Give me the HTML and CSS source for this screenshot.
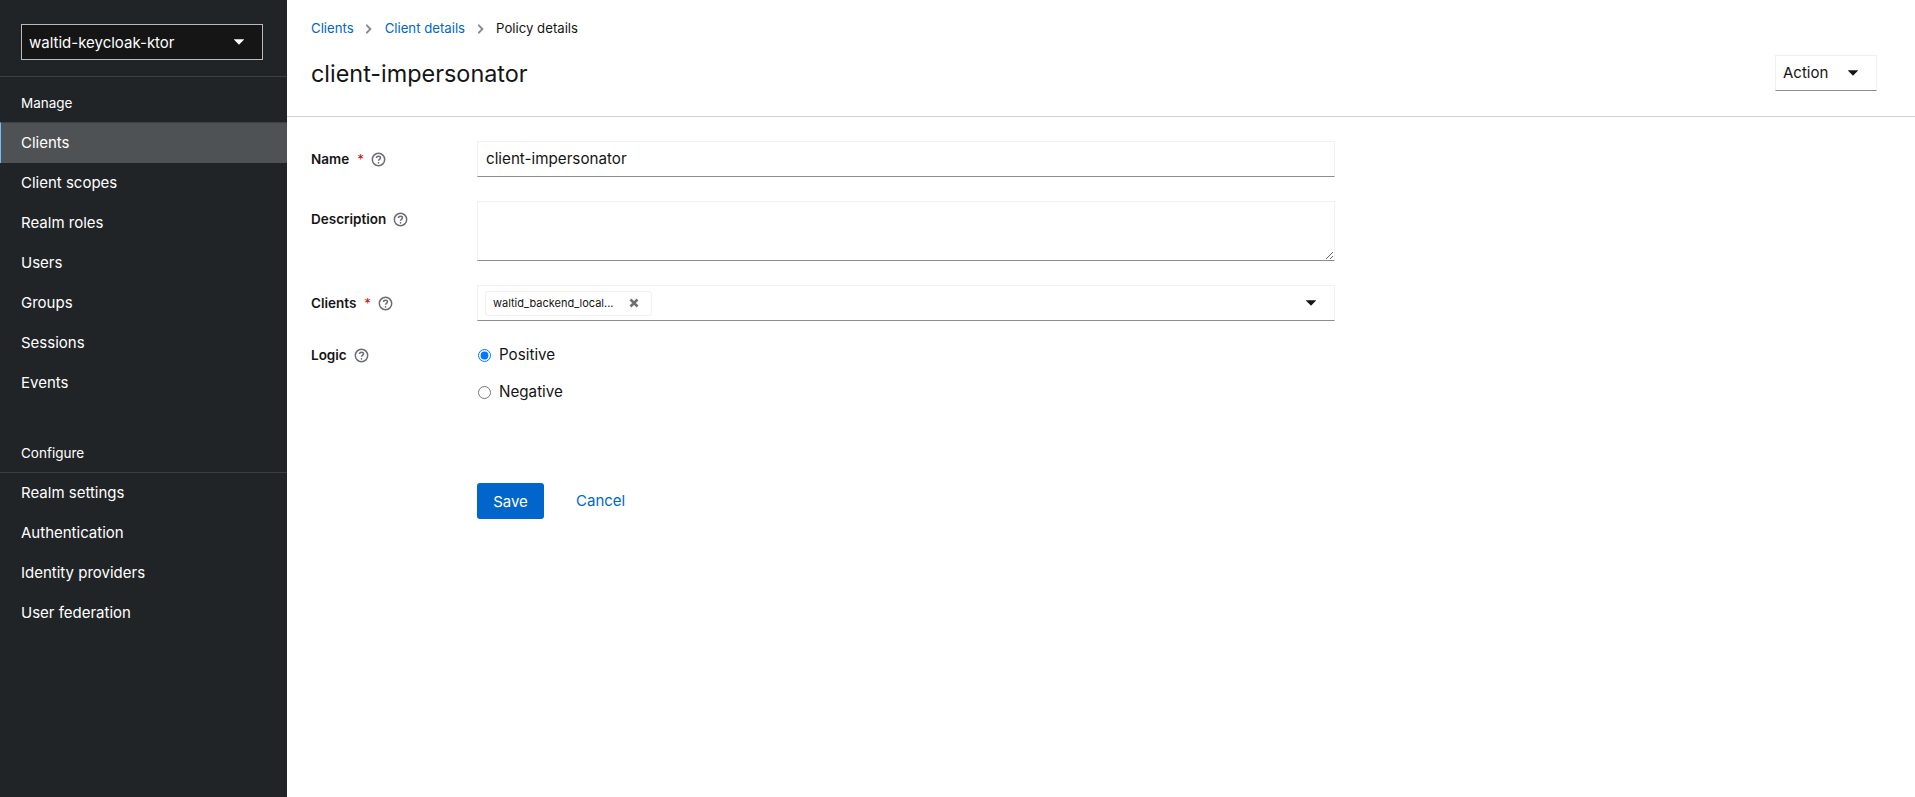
FILE: index.html
```html
<!DOCTYPE html>
<html lang="en">
<head>
<meta charset="utf-8">
<title>client-impersonator</title>
<link rel="stylesheet" href="styles.css">
</head>
<body>
<div class="app">
  <nav class="sidebar">
    <div class="realm-wrap">
      <button class="realm"><span>waltid-keycloak-ktor</span><svg class="caret" viewBox="0 0 10 6"><path d="M0.3 0.3h9.4a.3.3 0 0 1 .2.5L5.2 5.6a.3.3 0 0 1-.4 0L.1.8a.3.3 0 0 1 .2-.5z"/></svg></button>
    </div>
    <h2 class="nav-title">Manage</h2>
    <ul class="nav-list">
      <li class="nav-item active">Clients</li>
      <li class="nav-item">Client scopes</li>
      <li class="nav-item">Realm roles</li>
      <li class="nav-item">Users</li>
      <li class="nav-item">Groups</li>
      <li class="nav-item">Sessions</li>
      <li class="nav-item">Events</li>
    </ul>
    <h2 class="nav-title configure">Configure</h2>
    <ul class="nav-list">
      <li class="nav-item">Realm settings</li>
      <li class="nav-item">Authentication</li>
      <li class="nav-item">Identity providers</li>
      <li class="nav-item">User federation</li>
    </ul>
  </nav>
  <main class="main">
    <header class="head">
      <ol class="crumbs">
        <li><a class="link">Clients</a></li>
        <li class="sep"><svg viewBox="0 0 6 10"><path d="M1.3 0.5 5.3 4.5a.7.7 0 0 1 0 1L1.3 9.5a.7.7 0 0 1-1 0L.1 8.9a.7.7 0 0 1 0-1L3 5 .1 2.1a.7.7 0 0 1 0-1l.3-.6a.7.7 0 0 1 .9 0z"/></svg></li>
        <li><a class="link">Client details</a></li>
        <li class="sep"><svg viewBox="0 0 6 10"><path d="M1.3 0.5 5.3 4.5a.7.7 0 0 1 0 1L1.3 9.5a.7.7 0 0 1-1 0L.1 8.9a.7.7 0 0 1 0-1L3 5 .1 2.1a.7.7 0 0 1 0-1l.3-.6a.7.7 0 0 1 .9 0z"/></svg></li>
        <li>Policy details</li>
      </ol>
      <div class="title-row">
        <h1 class="title">client-impersonator</h1>
        <button class="action"><span>Action</span><svg class="caret dark" viewBox="0 0 10 6"><path d="M0.3 0.3h9.4a.3.3 0 0 1 .2.5L5.2 5.6a.3.3 0 0 1-.4 0L.1.8a.3.3 0 0 1 .2-.5z"/></svg></button>
      </div>
    </header>
    <form class="form">
      <div class="row name-row">
        <div class="label"><b>Name</b><i class="req">*</i><svg class="help" viewBox="0 0 16 16"><circle cx="8" cy="8" r="6.6"/><path d="M5.9 6.3c0-1.2 1-1.9 2.1-1.9s2.1.7 2.1 1.8c0 1.700-2.100 1.600-2.100 3.100"/><circle class="dot" cx="8" cy="11.500" r=".9"/></svg></div>
        <div class="field text-field">client-impersonator</div>
      </div>
      <div class="row desc-row">
        <div class="label"><b>Description</b><svg class="help" viewBox="0 0 16 16"><circle cx="8" cy="8" r="6.6"/><path d="M5.9 6.3c0-1.2 1-1.9 2.1-1.9s2.1.7 2.1 1.8c0 1.700-2.100 1.600-2.100 3.100"/><circle class="dot" cx="8" cy="11.500" r=".9"/></svg></div>
        <textarea class="field area" aria-label="Description"></textarea>
      </div>
      <div class="row clients-row">
        <div class="label"><b>Clients</b><i class="req">*</i><svg class="help" viewBox="0 0 16 16"><circle cx="8" cy="8" r="6.6"/><path d="M5.9 6.3c0-1.2 1-1.9 2.1-1.9s2.1.7 2.1 1.8c0 1.700-2.100 1.600-2.100 3.100"/><circle class="dot" cx="8" cy="11.500" r=".9"/></svg></div>
        <div class="field select-field">
          <span class="chip"><span class="chip-text">waltid_backend_local...</span><svg class="x" viewBox="0 0 10 10"><path d="M1.500 1.500 8.500 8.500M8.500 1.500 1.500 8.500"/></svg></span>
          <svg class="caret dark" viewBox="0 0 10 6"><path d="M0.3 0.3h9.4a.3.3 0 0 1 .2.5L5.2 5.6a.3.3 0 0 1-.4 0L.1.8a.3.3 0 0 1 .2-.5z"/></svg>
        </div>
      </div>
      <div class="row logic-row">
        <div class="label"><b>Logic</b><svg class="help" viewBox="0 0 16 16"><circle cx="8" cy="8" r="6.6"/><path d="M5.9 6.3c0-1.2 1-1.9 2.1-1.9s2.1.7 2.1 1.8c0 1.700-2.100 1.600-2.100 3.100"/><circle class="dot" cx="8" cy="11.500" r=".9"/></svg></div>
        <div class="radios">
          <label class="radio"><input type="radio" name="logic" checked>Positive</label>
          <label class="radio"><input type="radio" name="logic">Negative</label>
        </div>
      </div>
      <div class="row actions-row">
        <div class="label"></div>
        <div class="actions"><button class="save" type="button">Save</button><button class="cancel" type="button">Cancel</button></div>
      </div>
    </form>
  </main>
</div>
</body>
</html>
```
FILE: styles.css
```css
* { box-sizing: border-box; }
html, body { margin: 0; height: 100%; }
body { font-family: "Inter", "Liberation Sans", sans-serif; font-size: 15px; color: #151515; background: #fff; }
.app { display: flex; height: 797px; overflow: hidden; }
button { font: inherit; }
.caret { width: 10px; height: 6px; fill: #fff; display: block; }
.caret.dark { fill: #151515; }

.sidebar { width: 287px; flex: none; background: #212427; color: #fff; }
.realm-wrap { padding: 24px 21px 16px; border-bottom: 1px solid #3c3f42; height: 77px; }
.realm { width: 242px; height: 36px; background: #151515; color: #fff; border: 1px solid #b8bbbe; padding: 0 18px 0 7px; display: flex; align-items: center; justify-content: space-between; }
.nav-title { margin: 0; font-size: 13.5px; font-weight: 400; line-height: 21px; padding: 16px 21px 8px; height: 45px; }
.nav-title.configure { margin-top: 26px; border-bottom: 1px solid #3c3f42; height: 44px; padding-top: 14px; }
.nav-list { list-style: none; margin: 0; padding: 0; }
.nav-item { height: 40px; line-height: 40px; padding-left: 21px; }
.nav-item.active { background: #4f5255; border-left: 1px solid #73bcf7; border-top: 1px solid #3c3f42; padding-left: 20px; height: 41px; line-height: 40px; }

.main { flex: 1; min-width: 0; }
.head { height: 117px; border-bottom: 1px solid #d2d2d2; padding: 18px 38px 0 24px; }
.crumbs { list-style: none; margin: 0; padding: 0; display: flex; align-items: center; font-size: 13.2px; line-height: 21px; }
.sep { width: 31px; display: flex; justify-content: center; }
.sep svg { width: 6px; height: 10px; fill: #8a8d90; }
.link { color: #06c; }
.title-row { display: flex; align-items: center; justify-content: space-between; margin-top: 16px; }
.title { margin: 1px 0 0; font-size: 23.4px; font-weight: 400; line-height: 35px; }
.action { width: 102px; height: 36px; background: #fff; border: 1px solid #f0f0f0; border-bottom-color: #8a8d90; color: #151515; display: flex; align-items: center; justify-content: space-between; padding: 0 18px 1px 7px; }

.form { padding: 24px 0 0 24px; }
.row { display: flex; }
.label { width: 166px; flex: none; display: flex; align-items: center; height: 24px; font-size: 13.5px; margin-top: 6px; }
.label b { font-weight: 600; }
.req { color: #c9190b; font-style: normal; margin-left: 8px; }
.help { width: 15px; height: 15px; margin-left: 7px; fill: none; stroke: #6a6e73; stroke-width: 1.600; }
.help .dot { fill: #6a6e73; stroke: none; }
.field { width: 858px; border: 1px solid #f0f0f0; border-bottom-color: #8a8d90; background: #fff; display: block; }
.text-field { height: 36px; line-height: 33px; padding-left: 8px; font-size: 15.2px; }
.desc-row { margin-top: 24px; }
.area { height: 60px; resize: both; }
.clients-row { margin-top: 24px; }
.select-field { height: 36px; display: flex; align-items: center; justify-content: space-between; padding: 0 18px 0 7px; }
.chip { display: flex; align-items: center; height: 25px; border: 1px solid #f0f0f0; border-radius: 3px; padding: 0 12px 0 7px; font-size: 11px; width: 167px; justify-content: space-between; color: #151515; }
.x { width: 10px; height: 10px; fill: none; stroke: #6a6e73; stroke-width: 2.500; }
.logic-row { margin-top: 23px; }
.logic-row .label { margin-top: 0; height: 22px; }
.radios { display: flex; flex-direction: column; gap: 15px; margin-top: 0; }
.radio { display: flex; align-items: center; height: 22px; line-height: 22px; font-size: 15.2px; }
.radio input { margin: 0 8px 0 1px; width: 13px; height: 13px; }
.actions-row { margin-top: 80px; }
.actions { display: flex; align-items: center; }
.save { width: 67px; height: 36px; background: #06c; color: #fff; border: 0; border-radius: 3px; padding: 0; }
.cancel { background: none; border: 0; color: #06c; margin-left: 32px; padding: 0 0 2px; }
```
